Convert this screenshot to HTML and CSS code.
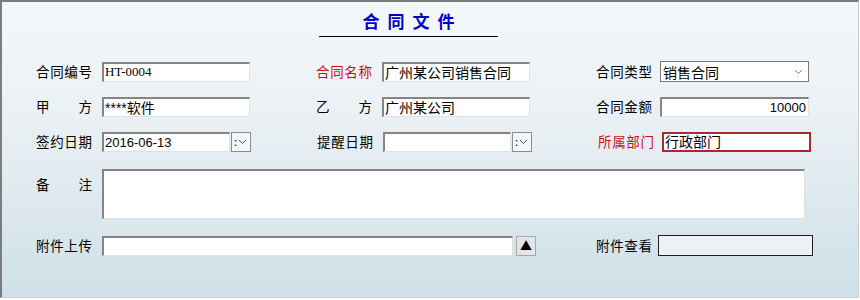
FILE: index.html
```html
<!DOCTYPE html>
<html lang="zh-CN">
<head>
    <meta charset="UTF-8">
    <meta name="viewport" content="width=device-width, initial-scale=1.0">
    <title>合同文件</title>
    <link rel="stylesheet" href="styles.css">
</head>
<body>
    <div class="frame">
        <h1 class="title">合同文件</h1>

        <div class="row">
            <div class="field">
                <label class="label">合同编号</label>
                <input class="box serif" type="text" value="HT-0004">
            </div>
            <div class="field">
                <label class="label required">合同名称</label>
                <input class="box" type="text" value="广州某公司销售合同">
            </div>
            <div class="field narrow">
                <label class="label">合同类型</label>
                <div class="select">
                    <span>销售合同</span>
                    <svg width="9" height="6" viewBox="0 0 9 6"><polyline points="1,1 4.5,4.5 8,1" fill="none" stroke="#8a8a8a" stroke-width="1"/></svg>
                </div>
            </div>
        </div>

        <div class="row">
            <div class="field">
                <label class="label">甲方</label>
                <input class="box" type="text" value="****软件">
            </div>
            <div class="field">
                <label class="label">乙方</label>
                <input class="box" type="text" value="广州某公司">
            </div>
            <div class="field narrow">
                <label class="label">合同金额</label>
                <input class="box num wide" type="text" value="10000">
            </div>
        </div>

        <div class="row">
            <div class="field">
                <label class="label">签约日期</label>
                <input class="box date num" type="text" value="2016-06-13">
                <div class="date-btn">
                    <span>:</span>
                    <svg width="9" height="6" viewBox="0 0 9 6"><polyline points="1,1 4.5,4.5 8,1" fill="none" stroke="#555" stroke-width="1"/></svg>
                </div>
            </div>
            <div class="field">
                <label class="label">提醒日期</label>
                <input class="box date" type="text" value="">
                <div class="date-btn">
                    <span>:</span>
                    <svg width="9" height="6" viewBox="0 0 9 6"><polyline points="1,1 4.5,4.5 8,1" fill="none" stroke="#555" stroke-width="1"/></svg>
                </div>
            </div>
            <div class="field narrow">
                <label class="label required">所属部门</label>
                <input class="box wide alert" type="text" value="行政部门">
            </div>
        </div>

        <div class="row memo-row">
            <div class="field">
                <label class="label top">备注</label>
                <textarea class="box memo"></textarea>
            </div>
        </div>

        <div class="row upload-row">
            <div class="field">
                <label class="label">附件上传</label>
                <input class="box upload" type="text" value="">
                <div class="up-btn">▲</div>
            </div>
            <div class="field view">
                <label class="label">附件查看</label>
                <div class="viewer"></div>
            </div>
        </div>
    </div>
</body>
</html>
```

FILE: styles.css
```css
body {
    margin: 0;
    background: #fff;
    font-family: "Noto Sans CJK SC", "Liberation Sans", sans-serif;
}

.frame {
    box-sizing: border-box;
    width: 859px;
    height: 298px;
    border-top: 2px solid #7d7d7d;
    border-left: 2px solid #7d7d7d;
    border-right: 1px solid #c7d2d8;
    border-bottom: 1px solid #c7d2d8;
    background: linear-gradient(180deg, #f5f8fa 0%, #e8eff3 45%, #cee0e8 100%);
}

.title {
    width: 179px;
    margin: 9px 0 0 317px;
    padding: 0 0 5px 8px;
    box-sizing: border-box;
    border-bottom: 1px solid #000;
    font-size: 17px;
    line-height: 20px;
    font-weight: bold;
    letter-spacing: 8px;
    text-align: center;
    color: #0000c8;
}

.row {
    display: flex;
    align-items: center;
    gap: 66px;
    height: 21px;
    margin-top: 14px;
    padding-left: 34px;
}

.row:first-of-type {
    margin-top: 24px;
}

.field {
    display: flex;
    align-items: center;
}

.label {
    width: 56px;
    margin-right: 10px;
    font-size: 13.5px;
    line-height: 21px;
    color: #000;
    text-align: justify;
    text-align-last: justify;
}

.narrow .label {
    margin-right: 8px;
}

.label.required {
    color: #cc1010;
}

.box {
    box-sizing: border-box;
    width: 148px;
    height: 20px;
    margin: 0;
    padding: 0 1px;
    border-top: 2px solid #858585;
    border-left: 2px solid #858585;
    border-right: 1px solid #dde2e5;
    border-bottom: 1px solid #dde2e5;
    border-radius: 0;
    background: #fff;
    font-family: "Liberation Sans", "Noto Sans CJK SC", sans-serif;
    font-size: 14px;
    color: #000;
    outline: none;
}

.box.serif {
    font-family: "Liberation Serif", "Noto Sans CJK SC", serif;
    font-size: 13px;
}

.box.num {
    font-size: 13px;
}

.box.wide {
    width: 149px;
}

.narrow .num {
    text-align: right;
    padding-right: 2px;
}

.box.alert {
    border: 2px solid #b0262e;
    padding-bottom: 2px;
}

.box.date {
    width: 128px;
}

.date-btn {
    box-sizing: border-box;
    display: flex;
    align-items: center;
    justify-content: space-between;
    width: 20px;
    height: 20px;
    margin-left: 1px;
    padding: 0 3px 0 2px;
    border: 1px solid #8c8c8c;
    background: #f4f7f9;
    font-size: 11px;
    line-height: 1;
}

.select {
    box-sizing: border-box;
    display: flex;
    align-items: center;
    justify-content: space-between;
    width: 149px;
    height: 21px;
    padding: 0 5px 0 2px;
    border: 1px solid #7a7a7a;
    background: #fff;
    font-size: 14px;
}

.memo-row {
    height: 50px;
    margin-top: 17px;
    align-items: flex-start;
}

.memo-row .field {
    align-items: flex-start;
}

.label.top {
    padding-top: 5px;
}

.box.memo {
    width: 703px;
    height: 50px;
    resize: none;
}

.upload-row {
    margin-top: 16px;
    gap: 60px;
}

.box.upload {
    width: 411px;
}

.up-btn {
    box-sizing: border-box;
    width: 20px;
    height: 20px;
    margin-left: 3px;
    border: 1px solid #a8a8a8;
    background: #e2e4e6;
    font-size: 12px;
    line-height: 18px;
    text-align: center;
    color: #000;
}

.view .label {
    margin-right: 6px;
}

.viewer {
    box-sizing: border-box;
    width: 155px;
    height: 21px;
    border: 1px solid #1e1e1e;
    background: #eef1f3;
}
```
